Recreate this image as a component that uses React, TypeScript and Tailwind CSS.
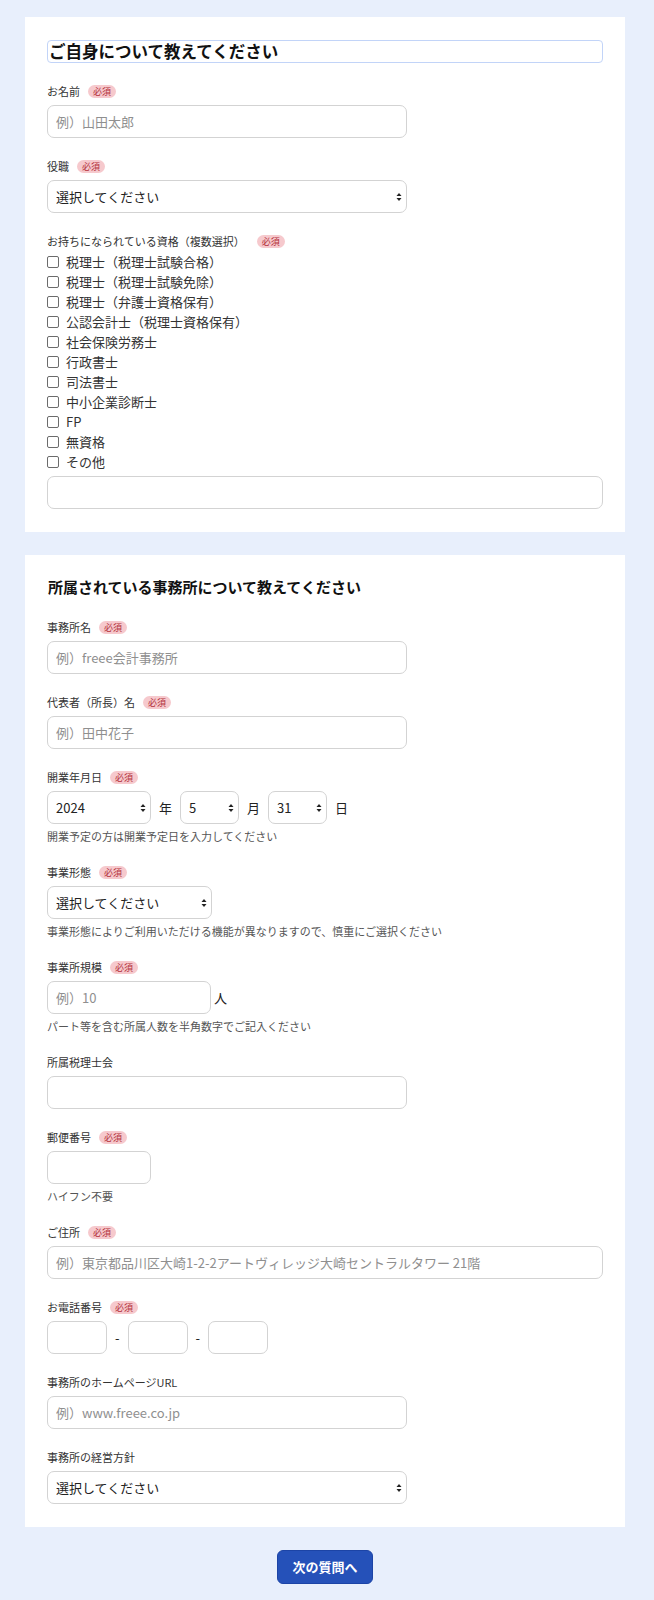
import React from 'react';

const font = "font-['Noto_Sans_CJK_JP','Noto_Sans',sans-serif]";

const inputBase =
  'h-[33px] rounded-[7px] border border-[#d3d3d3] bg-white px-2 text-[13px] text-[#222] placeholder:text-[#8f8f8f] outline-none';

function Badge() {
  return (
    <span className="inline-flex h-[13px] items-center rounded-full bg-[#f6c9cd] px-[5px] text-[9px] leading-none text-[#b3303a]">
      必須
    </span>
  );
}

function Label({ text, required }: { text: string; required?: boolean }) {
  return (
    <div className="flex h-4 items-center gap-2 text-[11px] leading-4 text-[#333]">
      <span>{text}</span>
      {required && <Badge />}
    </div>
  );
}

function Help({ text }: { text: string }) {
  return <div className="mt-1 text-[11px] leading-4 text-[#555]">{text}</div>;
}

function Arrows() {
  return (
    <svg width="6" height="9" viewBox="0 0 6 9" className="pointer-events-none absolute right-[5px] top-1/2 -translate-y-1/2">
      <path d="M3 0.5 L5.5 3.5 H0.5 Z" fill="#222" />
      <path d="M3 8.5 L5.5 5.5 H0.5 Z" fill="#222" />
    </svg>
  );
}

function Select({ value, width }: { value: string; width: string }) {
  return (
    <div className={`relative ${width}`}>
      <select
        defaultValue={value}
        className={`${inputBase} w-full appearance-none pr-6 text-[#111]`}
      >
        <option>{value}</option>
      </select>
      <Arrows />
    </div>
  );
}

function Field({
  label,
  required,
  children,
  help,
}: {
  label: string;
  required?: boolean;
  children: React.ReactNode;
  help?: string;
}) {
  return (
    <div>
      <Label text={label} required={required} />
      <div className="mt-[6px]">{children}</div>
      {help && <Help text={help} />}
    </div>
  );
}

const qualifications = [
  '税理士（税理士試験合格）',
  '税理士（税理士試験免除）',
  '税理士（弁護士資格保有）',
  '公認会計士（税理士資格保有）',
  '社会保険労務士',
  '行政書士',
  '司法書士',
  '中小企業診断士',
  'FP',
  '無資格',
  'その他',
];

export default function App() {
  return (
    <div className={`min-h-screen bg-[#e8effc] px-[25px] pt-[17px] pb-[18px] ${font}`}>
      {/* ご自身 */}
      <section className="w-[600px] bg-white px-[22px] pt-[23px] pb-[23px]">
        <div className="flex flex-col gap-5">
          <h2 className="h-[23px] rounded-[4px] border-[1.5px] border-[#c2d4f8] px-px text-[16.5px] font-bold leading-[20px] text-[#111]">
            ご自身について教えてください
          </h2>

          <Field label="お名前" required>
            <input className={`${inputBase} w-[360px]`} placeholder="例）山田太郎" />
          </Field>

          <Field label="役職" required>
            <Select value="選択してください" width="w-[360px]" />
          </Field>

          <div>
            <div className="flex h-4 items-center gap-3 text-[11px] leading-4 text-[#333]">
              <span>お持ちになられている資格（複数選択）</span>
              <Badge />
            </div>
            <div className="mt-[3px] flex flex-col">
              {qualifications.map((q) => (
                <label key={q} className="flex h-5 items-center gap-[7px] text-[13px] text-[#333]">
                  <input
                    type="checkbox"
                    className="h-[12px] w-[12px] appearance-none rounded-[2px] border border-[#6b6b6b] bg-white"
                  />
                  <span>{q}</span>
                </label>
              ))}
            </div>
            <input className={`${inputBase} mt-1 w-full`} />
          </div>
        </div>
      </section>

      {/* 事務所 */}
      <section className="mt-[23px] w-[600px] bg-white px-[22px] pt-[21px] pb-[23px]">
        <div className="flex flex-col gap-5">
          <h2 className="h-[23px] border-[1.5px] border-transparent px-0 text-[15px] font-bold leading-[20px] text-[#111]">
            所属されている事務所について教えてください
          </h2>

          <Field label="事務所名" required>
            <input className={`${inputBase} w-[360px]`} placeholder="例）freee会計事務所" />
          </Field>

          <Field label="代表者（所長）名" required>
            <input className={`${inputBase} w-[360px]`} placeholder="例）田中花子" />
          </Field>

          <Field label="開業年月日" required help="開業予定の方は開業予定日を入力してください">
            <div className="flex items-center text-[13px] text-[#222]">
              <Select value="2024" width="w-[104px]" />
              <span className="mx-2">年</span>
              <Select value="5" width="w-[59px]" />
              <span className="mx-2">月</span>
              <Select value="31" width="w-[59px]" />
              <span className="mx-2">日</span>
            </div>
          </Field>

          <Field
            label="事業形態"
            required
            help="事業形態によりご利用いただける機能が異なりますので、慎重にご選択ください"
          >
            <Select value="選択してください" width="w-[165px]" />
          </Field>

          <Field label="事業所規模" required help="パート等を含む所属人数を半角数字でご記入ください">
            <div className="flex items-center text-[13px] text-[#222]">
              <input className={`${inputBase} w-[164px]`} placeholder="例）10" />
              <span className="ml-[3px]">人</span>
            </div>
          </Field>

          <Field label="所属税理士会">
            <input className={`${inputBase} w-[360px]`} />
          </Field>

          <Field label="郵便番号" required help="ハイフン不要">
            <input className={`${inputBase} w-[104px]`} />
          </Field>

          <Field label="ご住所" required>
            <input
              className={`${inputBase} w-full`}
              placeholder="例）東京都品川区大崎1-2-2アートヴィレッジ大崎セントラルタワー 21階"
            />
          </Field>

          <Field label="お電話番号" required>
            <div className="flex items-center text-[13px] text-[#222]">
              <input className={`${inputBase} w-[60px]`} />
              <span className="mx-2">-</span>
              <input className={`${inputBase} w-[60px]`} />
              <span className="mx-2">-</span>
              <input className={`${inputBase} w-[60px]`} />
            </div>
          </Field>

          <Field label="事務所のホームページURL">
            <input className={`${inputBase} w-[360px]`} placeholder="例）www.freee.co.jp" />
          </Field>

          <Field label="事務所の経営方針">
            <Select value="選択してください" width="w-[360px]" />
          </Field>
        </div>
      </section>

      <div className="mt-[23px] flex w-[600px] justify-center">
        <button className="h-[34px] w-[96px] rounded-[6px] border border-[#1c44a6] bg-[#2551b9] text-[13px] font-bold text-white">
          次の質問へ
        </button>
      </div>
    </div>
  );
}
